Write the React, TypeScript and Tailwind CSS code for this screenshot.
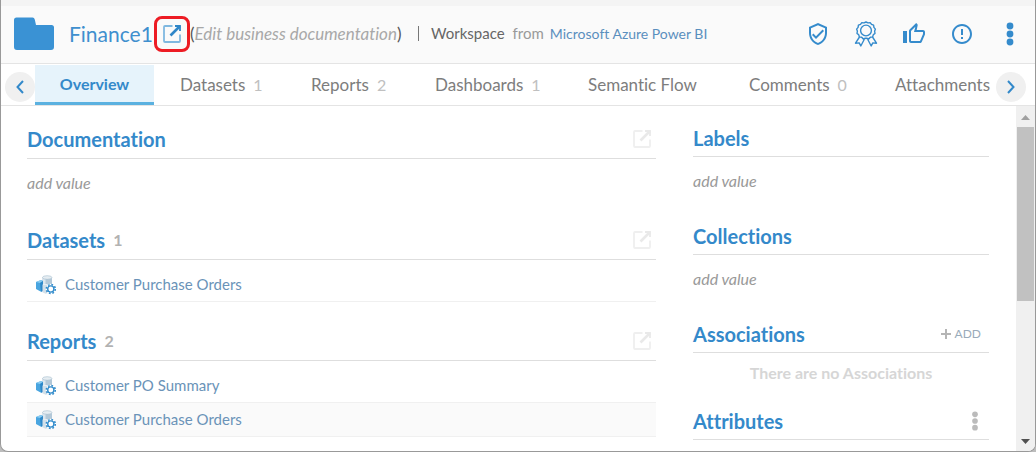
import React from "react";
import {
  MdErrorOutline,
  MdOutlineThumbUp,
  MdOutlineVerifiedUser,
} from "react-icons/md";

function ExternalIcon({ className, box }: { className: string; box: string }) {
  return (
    <svg viewBox="0 0 18 18" className={className} fill="none" aria-hidden="true">
      <path d="M9.500 1H2a1 1 0 0 0-1 1v14a1 1 0 0 0 1 1h14a1 1 0 0 0 1-1v-6.500" stroke={box} strokeWidth="1.800" />
      <path d="M12 1H17V6" stroke="currentColor" strokeWidth="1.800" />
      <path d="M17 1L7.500 10.500" stroke="currentColor" strokeWidth="2.600" />
    </svg>
  );
}

function FolderIcon() {
  return (
    <svg viewBox="0 0 40 33" className="h-[33px] w-10 shrink-0" aria-hidden="true">
      <path d="M2.500 0.500H18.500C20 0.500 20.500 1.500 20.900 3L22 8H37.500A2.500 2.500 0 0 1 40 10.500V30A3 3 0 0 1 37 33H3A3 3 0 0 1 0 30V3A2.500 2.500 0 0 1 2.500 0.500Z" fill="#3a92d4" />
    </svg>
  );
}

function RibbonIcon() {
  return (
    <svg viewBox="0 0 24 26" className="h-[26px] w-6" fill="none" stroke="currentColor" strokeWidth="1.400" strokeLinejoin="round" aria-hidden="true">
      <path d="M12 1l2 .9 2.200-.3 1.300 1.800 2.100.8.300 2.200 1.500 1.700-.8 2.100.4 2.200-1.700 1.400-.7 2.100-2.200.4-1.600 1.500-2.100-.6-.7.400-.7-.4-2.100.6-1.600-1.500-2.200-.4-.7-2.100L3 12.400l.4-2.200-.8-2.100 1.500-1.700.3-2.200 2.100-.8 1.300-1.800 2.200.3z" />
      <circle cx="12" cy="9.500" r="5.400" />
      <path d="M5.500 16L1.500 22.200l3.700-.3L6.800 25l3.400-6.500-2-1.500M18.500 16l4 6.200-3.700-.3L17.200 25l-3.400-6.500 2-1.500" />
    </svg>
  );
}

function Dots({ className }: { className: string }) {
  return (
    <svg viewBox="0 0 8 24" className={className} fill="currentColor" aria-hidden="true">
      <circle cx="4" cy="4" r="3.400" />
      <circle cx="4" cy="12" r="3.400" />
      <circle cx="4" cy="20" r="3.400" />
    </svg>
  );
}

function ModelIcon() {
  return (
    <svg viewBox="0 0 20 20" className="size-5 shrink-0" aria-hidden="true">
      <path d="M6.500 2.500V9h9.500V2.500z" fill="#b3c8d8" />
      <path d="M6.500 2.500V9h3V2.500z" fill="#dbe6ee" />
      <ellipse cx="11.200" cy="2.500" rx="4.700" ry="1.800" fill="#e6edf2" stroke="#a3bccd" strokeWidth=".6" />
      <path d="M0 7l5-2 2 1v10l-2 .8L0 14z" fill="#49a5e0" />
      <path d="M0 7l5-2 2 1-3 2z" fill="#8accf2" />
      <path d="M4 8l3-2v10l-2 .8z" fill="#2e88c8" />
      <path d="M6.500 9.500h6V18l-3 .8-3-1.500z" fill="#d3e0e9" />
      <circle cx="14.800" cy="14" r="5.200" fill="#fff" />
      <circle cx="14.800" cy="14" r="4.500" fill="none" stroke="#318bcb" strokeWidth="1.600" strokeDasharray="1.770 1.764" />
      <circle cx="14.800" cy="14" r="3.100" fill="#fff" stroke="#318bcb" strokeWidth="1.400" />
    </svg>
  );
}

function Chevron({ path }: { path: string }) {
  return (
    <svg viewBox="0 0 8 14" className="h-[14px] w-2" fill="none" stroke="#3389ca" strokeWidth="2" aria-hidden="true">
      <path d={path} />
    </svg>
  );
}

const tabs = [
  { label: "Overview" },
  { label: "Datasets", count: 1 },
  { label: "Reports", count: 2 },
  { label: "Dashboards", count: 1 },
  { label: "Semantic Flow" },
  { label: "Comments", count: 0 },
  { label: "Attachments" },
];

function MainSection({ title, count, children }: { title: string; count?: number; children: React.ReactNode }) {
  return (
    <section>
      <div className="flex h-[39px] items-center border-b border-[#dedede]">
        <h2 className="text-xl font-bold text-[#3489ca]">{title}</h2>
        {count !== undefined && <span className="ml-2 text-base font-bold text-[#b2b2b2]">{count}</span>}
        <button type="button" aria-label={`Open ${title}`} className="mr-[5px] ml-auto text-[#e9e9e9]">
          <ExternalIcon className="size-[18px]" box="#efefef" />
        </button>
      </div>
      {children}
    </section>
  );
}

function ItemList({ items }: { items: string[] }) {
  return (
    <ul className="pt-2">
      {items.map((item) => (
        <li key={item} className="flex h-[34px] items-center gap-[9px] border-b border-[#f0f0f0] pl-[9px] even:bg-[#fafafa]">
          <ModelIcon />
          <a href="#" className="text-[15px] text-[#6a93b8]">{item}</a>
        </li>
      ))}
    </ul>
  );
}

function SideSection({ title, action, children }: { title: string; action?: React.ReactNode; children?: React.ReactNode }) {
  return (
    <section>
      <div className="flex h-[37px] items-center justify-between border-b border-[#dedede]">
        <h2 className="text-xl font-bold text-[#3489ca]">{title}</h2>
        {action}
      </div>
      {children}
    </section>
  );
}

function AddValue() {
  return (
    <div className="flex h-[42px] items-start pt-3">
      <button type="button" className="text-base leading-6 text-[#999] italic">add value</button>
    </div>
  );
}

export default function App() {
  return (
    <div className="min-h-screen bg-[#bdbdbd] font-['Lato','Noto_Sans',sans-serif] [font-variant-ligatures:none]">
      <div className="flex min-h-screen flex-col overflow-hidden rounded-b-lg border-x border-b border-[#999] bg-white">
        <div className="h-[6px] bg-[#f4f4f4]" />
        <header className="flex h-[58px] items-center border-b border-[#e4e4e4] bg-[#fafafa] pr-[13px] pb-0.5 pl-[13px]">
          <FolderIcon />
          <h1 className="ml-[15px] min-w-[85px] text-[21px] whitespace-nowrap text-[#3f8fce]">Finance1</h1>
          <a href="#" aria-label="Open Finance1" className="flex size-9 shrink-0 items-center justify-center rounded-lg border-3 border-[#ed1c24] text-[#2f86c8]">
            <ExternalIcon className="size-[18px]" box="#7fb8e0" />
          </a>
          <p className="min-w-[228px] text-[17px] whitespace-nowrap text-[#555]">
            (<button type="button" className="text-[#a8a8a8] italic">Edit business documentation</button>)
          </p>
          <p className="flex items-center text-[15px] whitespace-nowrap">
            <span className="mr-3 h-[15px] w-px bg-[#777]" />
            <span className="text-[#666]">Workspace</span>
            <span className="ml-2 text-[#999]">from</span>
            <a href="#" className="ml-1.5 text-sm text-[#5a8fbe]">Microsoft Azure Power BI</a>
          </p>
          <div className="ml-auto flex items-center gap-6 text-[#358bcc]">
            <button type="button" aria-label="Certify"><MdOutlineVerifiedUser className="size-6" /></button>
            <button type="button" aria-label="Endorse"><RibbonIcon /></button>
            <button type="button" aria-label="Like"><MdOutlineThumbUp className="size-6" /></button>
            <button type="button" aria-label="Warn"><MdErrorOutline className="size-6" /></button>
            <button type="button" aria-label="More actions" className="flex w-6 justify-center"><Dots className="h-6 w-2" /></button>
          </div>
        </header>
        <nav className="flex h-[42px] items-stretch border-b border-[#e4e4e4] pr-[9px] pl-1">
          <button type="button" aria-label="Previous tabs" className="mt-2 flex size-[30px] shrink-0 items-center justify-center rounded-full bg-[#f0f0f0]">
            <Chevron path="M7 1L1.500 7L7 13" />
          </button>
          <div className="grid flex-1 grid-cols-[119fr_131fr_124fr_153fr_161fr_146fr_127fr]">
            {tabs.map(({ label, count }, i) => (
              <a
                key={label}
                href="#"
                className={
                  i === 0
                    ? "mt-px flex items-center justify-center border-b-3 border-[#5bb1e0] bg-[#e6f3fb] text-base font-bold text-[#3489ca]"
                    : "flex items-center gap-2 pl-[26px] text-[17px] whitespace-nowrap text-[#7d7d7d]"
                }
              >
                {label}
                {count !== undefined && <span className="text-base text-[#c0c0c0]">{count}</span>}
              </a>
            ))}
          </div>
          <button type="button" aria-label="Next tabs" className="mt-2 flex size-[30px] shrink-0 items-center justify-center rounded-full bg-[#f0f0f0]">
            <Chevron path="M1 1L6.500 7L1 13" />
          </button>
        </nav>
        <div className="flex flex-1">
          <main className="flex flex-1 gap-[37px] pt-[14px] pr-[27px] pb-2 pl-[26px]">
            <div className="flex min-w-0 flex-1 flex-col gap-5">
              <MainSection title="Documentation"><AddValue /></MainSection>
              <MainSection title="Datasets" count={1}><ItemList items={["Customer Purchase Orders"]} /></MainSection>
              <MainSection title="Reports" count={2}>
                <ItemList items={["Customer PO Summary", "Customer Purchase Orders"]} />
              </MainSection>
            </div>
            <aside className="w-[296px] shrink-0">
              <div className="flex flex-col gap-[19px] pb-[19px]">
                <SideSection title="Labels"><AddValue /></SideSection>
                <SideSection title="Collections"><AddValue /></SideSection>
              </div>
              <SideSection
                title="Associations"
                action={
                  <button type="button" className="mr-2 flex items-center gap-1 text-xs text-[#9aabba]">
                    <svg viewBox="0 0 10 10" className="size-[10px]" stroke="#b5b5b5" strokeWidth="2" aria-hidden="true"><path d="M5 0V10M0 5H10" /></svg>
                    ADD
                  </button>
                }
              >
                <p className="h-[50px] pt-2 text-center text-base leading-6 font-bold text-[#d6d6d6]">There are no Associations</p>
              </SideSection>
              <SideSection
                title="Attributes"
                action={<button type="button" aria-label="Attribute actions" className="mr-[10px] text-[#bbb]"><Dots className="h-[20px] w-2" /></button>}
              />
            </aside>
          </main>
          <div className="flex w-[19px] shrink-0 flex-col items-center justify-between bg-[#f0f0f0] pt-[9px] pb-[7px]" aria-hidden="true">
            <svg viewBox="0 0 9 5" className="h-[5px] w-[9px]"><path d="M0 5L4.500 0L9 5z" fill="#a0a0a0" /></svg>
            <div className="mt-[7px] mb-auto h-[174px] w-[17px] bg-[#c1c1c1]" />
            <svg viewBox="0 0 9 5" className="h-[5px] w-[9px]"><path d="M0 0L4.500 5L9 0z" fill="#505050" /></svg>
          </div>
        </div>
      </div>
    </div>
  );
}
